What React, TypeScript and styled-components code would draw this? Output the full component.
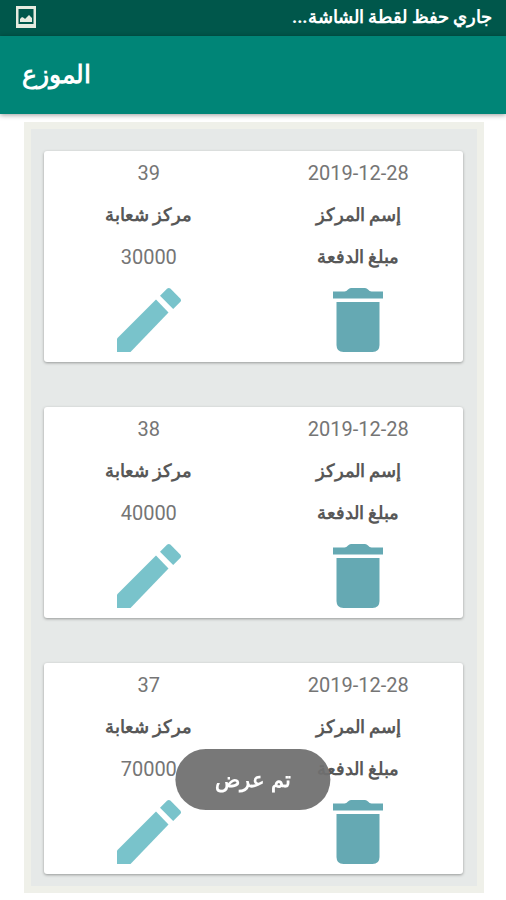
import React from "react";
import styled, { createGlobalStyle } from "styled-components";

const GlobalStyle = createGlobalStyle`
  *, *::before, *::after { box-sizing: border-box; }
  body {
    margin: 0;
    background: #ffffff;
    font-family: Roboto, "Liberation Serif", serif;
  }
`;

const Page = styled.div`
  direction: rtl;
`;

const StatusBar = styled.div`
  display: flex;
  align-items: center;
  justify-content: space-between;
  height: 36px;
  padding: 0 14px 2px 16px;
  background: #00574b;
  color: #ffffff;
  font-size: 18px;
  font-weight: 700;
  line-height: 24px;
`;

const AppBar = styled.header`
  display: flex;
  align-items: center;
  justify-content: flex-end;
  height: 78px;
  padding: 0 22px;
  background: #008577;
  box-shadow: 0 1px 5px rgba(0, 0, 0, 0.4);
`;

const Title = styled.h1`
  margin: 0;
  color: #ffffff;
  font-size: 25px;
  font-weight: 700;
  line-height: 32px;
`;

const Frame = styled.main`
  display: grid;
  gap: 45px;
  margin: 8px 22px 7px 24px;
  padding: 22px 14px 12px 13px;
  border: 7px solid #eff0e9;
  background: #e6e9e8;
`;

const Card = styled.article`
  display: grid;
  grid-template-columns: 1fr 1fr;
  padding-top: 1px;
  border-radius: 3px;
  background: #ffffff;
  box-shadow: 0 1px 3px rgba(0, 0, 0, 0.35);
`;

const Cell = styled.div<{ $kind?: "number" | "label" }>`
  display: flex;
  align-items: center;
  justify-content: center;
  height: 42px;
  color: ${(p) => (p.$kind === "label" ? "#585858" : "#757575")};
  font-size: ${(p) => (p.$kind === "label" ? 18 : 20)}px;
  font-weight: ${(p) => (p.$kind === "label" ? 700 : 400)};
  line-height: 24px;
`;

const ActionCell = styled.div`
  display: flex;
  align-items: center;
  justify-content: center;
  height: 84px;
`;

const IconButton = styled.button<{ $color: string }>`
  display: flex;
  padding: 0;
  border: 0;
  background: none;
  color: ${(p) => p.$color};
  cursor: pointer;
`;

const Toast = styled.div`
  position: fixed;
  bottom: 90px;
  left: 50%;
  transform: translateX(-50%);
  display: flex;
  align-items: center;
  height: 61px;
  padding: 0 40px;
  border-radius: 31px;
  background: rgba(112, 112, 112, 0.94);
  color: #ffffff;
  font-size: 21px;
  font-weight: 700;
  white-space: nowrap;
`;

const PictureIcon = () => (
  <svg width="20" height="22" viewBox="0 0 20 22" aria-hidden="true">
    <path
      fill="#e6ebe0"
      fillRule="evenodd"
      d="M0 0h20v22H0zM2.500 3v15h15V3z"
    />
    <path fill="#e6ebe0" d="M4 16v-3l2-2 2 1 1 1 4-4 3 3v4z" />
  </svg>
);

const TrashIcon = () => (
  <svg width="64" height="64" viewBox="0 0 64 64" fill="currentColor" aria-hidden="true">
    <path d="M7 3.5h11.500q2-.2 3.500-2 1.200-1.500 3-1.500h14q1.800 0 3 1.500 1.500 1.800 3.500 2H57v7H7z" />
    <path d="M10.500 14h43v43q0 7-7 7h-29q-7 0-7-7z" />
  </svg>
);

const PencilIcon = () => (
  <svg width="64" height="64" viewBox="0 0 64 64" fill="currentColor" aria-hidden="true">
    <path d="M0 50.500V64h13.500L51.500 24.500 39 11.500z" />
    <path d="M43 7.800 50 .8q1.800-1.600 3.600 0L63.200 10.400q1.600 1.800 0 3.600l-7 7z" />
  </svg>
);

type Payment = { id: number; date: string; center: string; amount: number };

const payments: Payment[] = [
  { id: 39, date: "2019-12-28", center: "مركز شعابة", amount: 30000 },
  { id: 38, date: "2019-12-28", center: "مركز شعابة", amount: 40000 },
  { id: 37, date: "2019-12-28", center: "مركز شعابة", amount: 70000 },
];

const PaymentCard = ({ payment }: { payment: Payment }) => (
  <Card>
    <Cell dir="ltr">{payment.date}</Cell>
    <Cell>{payment.id}</Cell>
    <Cell $kind="label">إسم المركز</Cell>
    <Cell $kind="label">{payment.center}</Cell>
    <Cell $kind="label">مبلغ الدفعة</Cell>
    <Cell>{payment.amount}</Cell>
    <ActionCell>
      <IconButton $color="#65a9b3" type="button" aria-label="حذف">
        <TrashIcon />
      </IconButton>
    </ActionCell>
    <ActionCell>
      <IconButton $color="#79c3cb" type="button" aria-label="تعديل">
        <PencilIcon />
      </IconButton>
    </ActionCell>
  </Card>
);

export default function App() {
  return (
    <Page lang="ar">
      <GlobalStyle />
      <StatusBar>
        <span>جاري حفظ لقطة الشاشة...</span>
        <PictureIcon />
      </StatusBar>
      <AppBar>
        <Title>الموزع</Title>
      </AppBar>
      <Frame>
        {payments.map((payment) => (
          <PaymentCard key={payment.id} payment={payment} />
        ))}
      </Frame>
      <Toast role="status">تم عرض</Toast>
    </Page>
  );
}
